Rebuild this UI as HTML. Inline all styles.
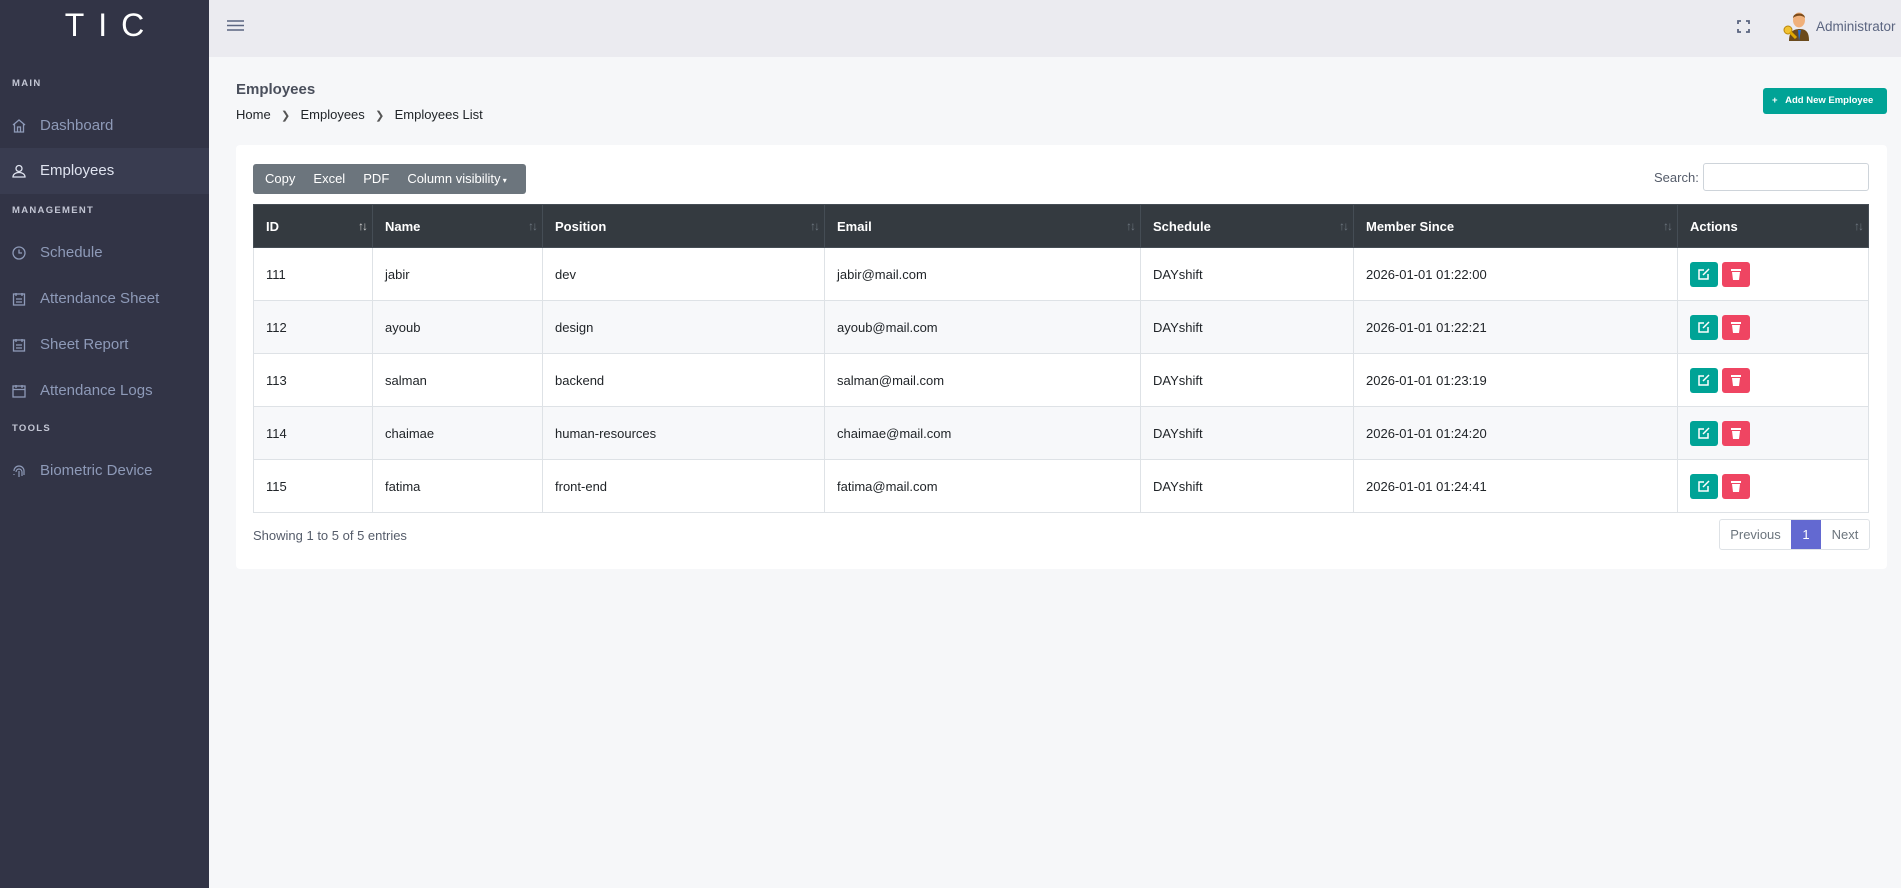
<!DOCTYPE html>
<html><head><meta charset="utf-8"><style>
*{box-sizing:border-box;margin:0;padding:0}
body{width:1901px;height:888px;overflow:hidden;background:#f6f7f9;font-family:"Liberation Sans",sans-serif;font-size:13px;color:#212529;position:relative}
.side{position:absolute;left:0;top:0;width:209px;height:888px;background:#323446}
.logo{position:absolute;top:7px;left:0;width:209px;text-align:center;color:#fff;font-size:32px;letter-spacing:14px;padding-left:14px}
.lab{position:absolute;left:12px;font-size:9.5px;font-weight:bold;letter-spacing:1.3px;color:#c3c6d4}
.item{position:absolute;left:0;width:209px;height:46px;line-height:46px;padding-left:40px;font-size:15px;color:#8e9ab8}
.item svg{position:absolute;left:12px;top:16px}
.item.act{background:#393c50;color:#dfe3ef}
.top{position:absolute;left:209px;top:0;right:0;height:57px;background:#ebebf0}
.card{position:absolute;left:236px;top:145px;width:1651px;height:424px;background:#fff;border-radius:4px}
table{position:absolute;left:253px;top:204px;border-collapse:collapse;table-layout:fixed;width:1616px}
th{background:#343a40;color:#fff;font-weight:bold;text-align:left;height:43px;padding-left:12px;border:1px solid #454d55;position:relative;font-size:13px}
th span.s{position:absolute;right:6px;top:14px;color:#6c757d;font-size:12px;font-weight:normal;letter-spacing:-2px}
td{height:53px;padding-left:12px;border:1px solid #dee2e6}
tr:nth-child(odd) td{background:#f7f8fa}
.b{display:inline-block;width:28px;height:25px;border-radius:3px;vertical-align:middle;text-align:center;padding-top:6px}
</style></head><body>
<div class="side">
<div class="logo">TIC</div>
<div class="lab" style="top:78px">MAIN</div>
<div class="item" style="top:103px"><svg width="14" height="14" viewBox="0 0 14 14" fill="none" stroke="#8e9ab8" stroke-width="1.3"><path d="M1 6L7 1l6 5M2.5 5v8h9V5M5.5 13V8h3v5"/></svg>Dashboard</div>
<div class="item act" style="top:148px"><svg width="14" height="14" viewBox="0 0 14 14" fill="none" stroke="#dfe3ef" stroke-width="1.3"><circle cx="7" cy="4.5" r="3"/><path d="M1 13c0-3 3-4.5 6-4.5s6 1.5 6 4.5z"/></svg>Employees</div>
<div class="lab" style="top:205px">MANAGEMENT</div>
<div class="item" style="top:230px"><svg width="14" height="14" viewBox="0 0 14 14" fill="none" stroke="#8e9ab8" stroke-width="1.3"><circle cx="7" cy="7" r="6"/><path d="M7 3.5V7h3"/></svg>Schedule</div>
<div class="item" style="top:276px"><svg width="14" height="14" viewBox="0 0 14 14" fill="none" stroke="#8e9ab8" stroke-width="1.3"><rect x="1.5" y="2" width="11" height="11"/><path d="M4 1v3M10 1v3M4 7h6M4 10h6"/></svg>Attendance Sheet</div>
<div class="item" style="top:322px"><svg width="14" height="14" viewBox="0 0 14 14" fill="none" stroke="#8e9ab8" stroke-width="1.3"><rect x="1.5" y="2" width="11" height="11"/><path d="M4 1v3M10 1v3M4 7h6M4 10h6"/></svg>Sheet Report</div>
<div class="item" style="top:368px"><svg width="14" height="14" viewBox="0 0 14 14" fill="none" stroke="#8e9ab8" stroke-width="1.3"><rect x="1" y="2" width="12" height="11"/><path d="M4 1v3M10 1v3M1 5.5h12"/></svg>Attendance Logs</div>
<div class="lab" style="top:423px">TOOLS</div>
<div class="item" style="top:448px"><svg width="14" height="14" viewBox="0 0 14 14" fill="none" stroke="#8e9ab8" stroke-width="1.2"><path d="M2 7a5 5 0 0 1 10 0v4M4 8a3 3 0 0 1 6 0v4M7 7v6M2 10v1"/></svg>Biometric Device</div>
</div>
<div class="top">
<svg style="position:absolute;left:18px;top:19px" width="17" height="13" viewBox="0 0 17 13" stroke="#5b6580" stroke-width="1.6"><path d="M0 2h17M0 6.5h17M0 11h17"/></svg>
<svg style="position:absolute;left:1528px;top:20px" width="13" height="13" viewBox="0 0 13 13" fill="none" stroke="#5b6580" stroke-width="1.8"><path d="M1 4V1h3M9 1h3v3M12 9v3H9M4 12H1V9"/></svg>
<svg style="position:absolute;left:1574px;top:9px" width="26" height="32" viewBox="0 0 26 32"><path d="M6 32c0-8 3-12 11-12s9 6 9 12z" fill="#6b4a1c"/><path d="M15 21l1 11 2-11z" fill="#2a6fd0"/><ellipse cx="16" cy="11" rx="6" ry="7.5" fill="#f0b07a"/><path d="M10 9c0-6 12-6 12 0-2-3-9-3-12 0z" fill="#7a4a1a"/><circle cx="5" cy="21" r="4" fill="#f1c232" stroke="#b8860b"/><path d="M7 23l6 6" stroke="#e0a800" stroke-width="3"/></svg>
<div style="position:absolute;left:1607px;top:19px;font-size:13.5px;color:#5b6580">Administrator</div>
</div>
<div style="position:absolute;left:236px;top:81px;font-size:15px;font-weight:bold;color:#4a4f5c">Employees</div>
<div style="position:absolute;left:236px;top:107px;font-size:13px;color:#212529">Home &nbsp;<span style="color:#555;font-size:11px">&nbsp;&#10095;&nbsp;</span>&nbsp; Employees &nbsp;<span style="color:#555;font-size:11px">&nbsp;&#10095;&nbsp;</span>&nbsp; Employees List</div>
<div style="position:absolute;left:1763px;top:88px;width:124px;height:26px;background:#00a396;border-radius:3px;color:#fff;font-size:9.5px;font-weight:bold;line-height:26px;padding-left:9px;white-space:nowrap">+ &nbsp; Add New Employee</div>
<div class="card"></div>
<div style="position:absolute;left:253px;top:164px;width:273px;height:30px;background:#6c757d;border-radius:3px;color:#fff;font-size:13px;line-height:30px;padding-left:12px;word-spacing:0">Copy &nbsp;&nbsp;&nbsp;&nbsp;Excel &nbsp;&nbsp;&nbsp;&nbsp;PDF &nbsp;&nbsp;&nbsp;&nbsp;Column visibility<span style="font-size:8px"> ▾</span></div>
<div style="position:absolute;left:1654px;top:170px;color:#555c6a">Search:</div>
<div style="position:absolute;left:1703px;top:163px;width:166px;height:28px;border:1px solid #ced4da;border-radius:3px;background:#fff"></div>
<table>
<colgroup><col style="width:119px"><col style="width:170px"><col style="width:282px"><col style="width:316px"><col style="width:213px"><col style="width:324px"><col></colgroup>
<tr><th>ID<span class="s" style="color:#ccc">↑↓</span></th><th>Name<span class="s">↑↓</span></th><th>Position<span class="s">↑↓</span></th><th>Email<span class="s">↑↓</span></th><th>Schedule<span class="s">↑↓</span></th><th>Member Since<span class="s">↑↓</span></th><th>Actions<span class="s">↑↓</span></th></tr>
<tr><td>111</td><td>jabir</td><td>dev</td><td>jabir@mail.com</td><td>DAYshift</td><td>2026-01-01 01:22:00</td><td><span class="b" style="background:#00a396"><svg width="12" height="12" viewBox="0 0 12 12" fill="none" stroke="#fff" stroke-width="1.5"><path d="M6 2H1v9h9V6M5 7l6-6"/></svg></span> <span class="b" style="background:#ef4562"><svg width="10" height="12" viewBox="0 0 10 12" fill="#fff"><rect x="0" y="1" width="10" height="2"/><path d="M1 4h8l-1 8H2z"/></svg></span></td></tr>
<tr><td>112</td><td>ayoub</td><td>design</td><td>ayoub@mail.com</td><td>DAYshift</td><td>2026-01-01 01:22:21</td><td><span class="b" style="background:#00a396"><svg width="12" height="12" viewBox="0 0 12 12" fill="none" stroke="#fff" stroke-width="1.5"><path d="M6 2H1v9h9V6M5 7l6-6"/></svg></span> <span class="b" style="background:#ef4562"><svg width="10" height="12" viewBox="0 0 10 12" fill="#fff"><rect x="0" y="1" width="10" height="2"/><path d="M1 4h8l-1 8H2z"/></svg></span></td></tr>
<tr><td>113</td><td>salman</td><td>backend</td><td>salman@mail.com</td><td>DAYshift</td><td>2026-01-01 01:23:19</td><td><span class="b" style="background:#00a396"><svg width="12" height="12" viewBox="0 0 12 12" fill="none" stroke="#fff" stroke-width="1.5"><path d="M6 2H1v9h9V6M5 7l6-6"/></svg></span> <span class="b" style="background:#ef4562"><svg width="10" height="12" viewBox="0 0 10 12" fill="#fff"><rect x="0" y="1" width="10" height="2"/><path d="M1 4h8l-1 8H2z"/></svg></span></td></tr>
<tr><td>114</td><td>chaimae</td><td>human-resources</td><td>chaimae@mail.com</td><td>DAYshift</td><td>2026-01-01 01:24:20</td><td><span class="b" style="background:#00a396"><svg width="12" height="12" viewBox="0 0 12 12" fill="none" stroke="#fff" stroke-width="1.5"><path d="M6 2H1v9h9V6M5 7l6-6"/></svg></span> <span class="b" style="background:#ef4562"><svg width="10" height="12" viewBox="0 0 10 12" fill="#fff"><rect x="0" y="1" width="10" height="2"/><path d="M1 4h8l-1 8H2z"/></svg></span></td></tr>
<tr><td>115</td><td>fatima</td><td>front-end</td><td>fatima@mail.com</td><td>DAYshift</td><td>2026-01-01 01:24:41</td><td><span class="b" style="background:#00a396"><svg width="12" height="12" viewBox="0 0 12 12" fill="none" stroke="#fff" stroke-width="1.5"><path d="M6 2H1v9h9V6M5 7l6-6"/></svg></span> <span class="b" style="background:#ef4562"><svg width="10" height="12" viewBox="0 0 10 12" fill="#fff"><rect x="0" y="1" width="10" height="2"/><path d="M1 4h8l-1 8H2z"/></svg></span></td></tr>
</table>
<div style="position:absolute;left:253px;top:528px;color:#555c6a">Showing 1 to 5 of 5 entries</div>
<div style="position:absolute;left:1719px;top:519px;height:31px;display:flex;border:1px solid #dee2e6;border-radius:3px;background:#fff;line-height:29px;color:#6c757d">
<div style="width:71px;text-align:center">Previous</div>
<div style="width:30px;text-align:center;background:#6369d1;color:#fff">1</div>
<div style="width:48px;text-align:center">Next</div>
</div>
</body></html>
